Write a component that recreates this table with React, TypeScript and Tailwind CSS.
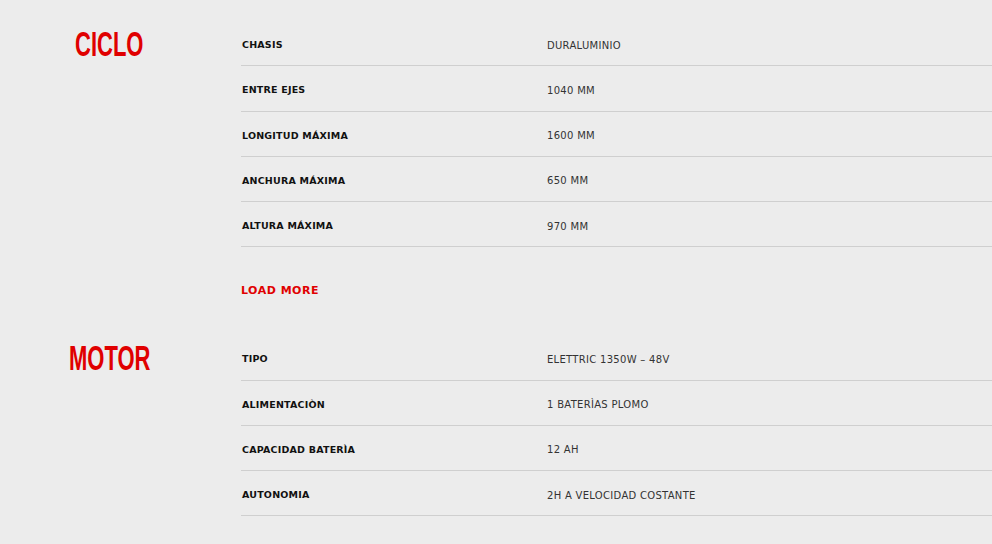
import React from "react";

const ciclo: [string, string][] = [
  ["CHASIS", "DURALUMINIO"],
  ["ENTRE EJES", "1040 MM"],
  ["LONGITUD MÁXIMA", "1600 MM"],
  ["ANCHURA MÁXIMA", "650 MM"],
  ["ALTURA MÁXIMA", "970 MM"],
];

const motor: [string, string][] = [
  ["TIPO", "ELETTRIC 1350W – 48V"],
  ["ALIMENTACIÒN", "1 BATERÌAS PLOMO"],
  ["CAPACIDAD BATERÌA", "12 AH"],
  ["AUTONOMIA", "2H A VELOCIDAD COSTANTE"],
];

const sans = { fontFamily: '"DejaVu Sans", sans-serif' };

function Heading({ text }: { text: string }) {
  return (
    <div className="w-[219px] flex justify-center">
      <div className="h-[45px] flex items-center pt-[2px]">
        <span
          className="inline-block text-[35.5px] leading-none font-bold text-[#e00000] scale-x-[0.62]"
          style={{ fontFamily: '"Liberation Sans", Arial, sans-serif' }}
        >
          {text}
        </span>
      </div>
    </div>
  );
}

function Rows({ rows }: { rows: [string, string][] }) {
  return (
    <>
      {rows.map(([k, v]) => (
        <div
          key={k}
          className="h-[45.25px] border-b border-[#cfcfcf] flex items-center pt-[4px]"
          style={sans}
        >
          <div className="w-[306px] shrink-0 pl-px text-[9.5px] font-bold text-[#111] tracking-[0.2px]">{k}</div>
          <div className="text-[10px] text-[#333] tracking-[0.3px]">{v}</div>
        </div>
      ))}
    </>
  );
}

export default function App() {
  return (
    <div className="min-h-screen bg-[#ececec] pt-[21px]">
      <section className="flex">
        <Heading text="CICLO" />
        <div className="flex-1 ml-[22px]">
          <Rows rows={ciclo} />
          <div className="h-[88px] flex items-center pb-[1px]" style={sans}>
            <span className="text-[11px] font-bold text-[#e00000] tracking-[0.5px]">LOAD MORE</span>
          </div>
        </div>
      </section>
      <section className="flex">
        <Heading text="MOTOR" />
        <div className="flex-1 ml-[22px]">
          <Rows rows={motor} />
        </div>
      </section>
    </div>
  );
}
